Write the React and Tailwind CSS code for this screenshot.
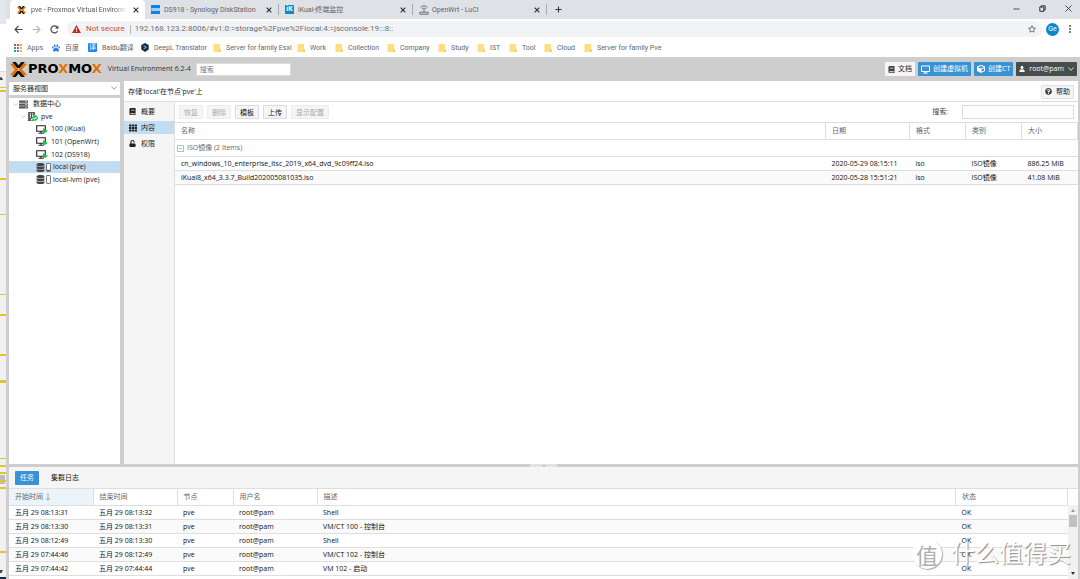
import React from "react";
import {
  FaBook,
  FaDesktop,
  FaCube,
  FaUser,
  FaQuestionCircle,
  FaTh,
  FaUnlock,
  FaDatabase,
  FaServer,
  FaBuilding,
  FaCheckCircle,
  FaPaw,
  FaRegStar,
} from "react-icons/fa";

const APP_FONT = "font-['Open_Sans','Noto_Sans_CJK_SC',sans-serif]";
const CHROME_FONT = "font-['Roboto','Noto_Sans_CJK_SC',sans-serif]";

function ProxmoxMark({ className }) {
  return (
    <svg viewBox="0 0 32 28" className={className} aria-hidden="true">
      <path d="M4 0h7l5 6 5-6h7l-9 11h-6z" fill="#111" />
      <path d="M4 28h7l5-6 5 6h7l-9-11h-6z" fill="#111" />
      <path d="M0 3h7l9 11-9 11H0l9-11z" fill="#e57000" />
      <path d="M32 3h-7l-9 11 9 11h7l-9-11z" fill="#e57000" />
    </svg>
  );
}

function CloseIcon() {
  return (
    <svg viewBox="0 0 6 6" className="size-[6px]" stroke="#333" strokeWidth="1.200" aria-hidden="true">
      <path d="M.7.7l4.600 4.600M5.300.7L.7 5.300" />
    </svg>
  );
}

function Chevron({ className }) {
  return (
    <svg viewBox="0 0 6 4" className={className} fill="none" stroke="currentColor" strokeWidth="0.800" aria-hidden="true">
      <path d="M.5.5L3 3.300 5.500.5" />
    </svg>
  );
}

function RouterIcon() {
  return (
    <svg viewBox="0 0 10 10" className="size-[10px]" fill="none" stroke="#666" strokeWidth="0.900" aria-hidden="true">
      <path d="M1.500 2.300Q5-.8 8.500 2.300M3 3.800Q5 2 7 3.800M5 4.200v3M.8 7.200h8.400v2H.8z" />
    </svg>
  );
}

const tabs = [
  {
    title: "DS918 - Synology DiskStation",
    icon: (
      <span className="flex size-[9px] items-center justify-center bg-[#0a84e8] text-[4px] font-bold leading-none text-white">
        DSM
      </span>
    ),
  },
  {
    title: "iKuai-终端监控",
    icon: (
      <span className="flex size-[9px] items-center justify-center bg-[#1487c9] text-[7px] font-bold leading-none text-white">
        iK
      </span>
    ),
  },
  { title: "OpenWrt - LuCI", icon: <RouterIcon /> },
];

function TabStrip() {
  return (
    <div className="flex h-[19px] shrink-0 items-stretch bg-[#dee1e6] pl-1 text-[7px] text-[#5f6368]">
      <div className="flex w-[135px] items-center rounded-t-[4px] bg-white pl-[7px] pr-[6px] text-[#54575b]">
        <ProxmoxMark className="mr-[5px] h-[8px] w-[9px] shrink-0" />
        <span className="flex-1 overflow-hidden whitespace-nowrap [mask-image:linear-gradient(to_right,#000_85%,transparent)]">
          pve - Proxmox Virtual Environment
        </span>
        <button aria-label="关闭标签页" className="ml-[5px]">
          <CloseIcon />
        </button>
      </div>
      {tabs.map((t) => (
        <div key={t.title} className="flex w-[134px] items-center py-1">
          <div className="flex h-full w-full items-center gap-[3px] border-r border-[#a5a8ad] pl-[6px] pr-[6px]">
            <span className="flex w-[10px] shrink-0">{t.icon}</span>
            <span className="flex-1 overflow-hidden whitespace-nowrap">{t.title}</span>
            <button aria-label="关闭标签页">
              <CloseIcon />
            </button>
          </div>
        </div>
      ))}
      <button aria-label="新标签页" className="ml-2 flex items-center">
        <svg viewBox="0 0 8 8" className="size-[7px]" stroke="#333" strokeWidth="1.200">
          <path d="M4 .5v7M.5 4h7" />
        </svg>
      </button>
      <div className="ml-auto flex items-center gap-[19px] pb-[3px] pr-2">
        <button aria-label="最小化">
          <svg viewBox="0 0 7 7" className="size-[7px]" stroke="#222" strokeWidth="0.800">
            <path d="M.5 4h6" />
          </svg>
        </button>
        <button aria-label="还原">
          <svg viewBox="0 0 7 7" className="size-[7px]" fill="none" stroke="#222" strokeWidth="0.900">
            <path d="M.8 2h4v4.300h-4zM2.200 2V.8h4v4.200H4.800" />
          </svg>
        </button>
        <button aria-label="关闭">
          <svg viewBox="0 0 7 7" className="size-[7px]" stroke="#222" strokeWidth="0.800">
            <path d="M.5.5l6 6M6.500.5l-6 6" />
          </svg>
        </button>
      </div>
    </div>
  );
}

function AddressBar() {
  return (
    <div className="flex h-[20px] shrink-0 items-center bg-white pl-2 pr-2 text-[#5f6368]">
      <button aria-label="后退">
        <svg viewBox="0 0 9 9" className="size-[9px]" fill="none" stroke="#44474b" strokeWidth="1.100">
          <path d="M8.500 4.500H1M4.500 1L1 4.500 4.500 8" />
        </svg>
      </button>
      <button aria-label="前进" className="ml-[9px]">
        <svg viewBox="0 0 9 9" className="size-[9px]" fill="none" stroke="#b5b7ba" strokeWidth="1.100">
          <path d="M.5 4.500H8M4.500 1L8 4.500 4.500 8" />
        </svg>
      </button>
      <button aria-label="重新加载" className="ml-[9px]">
        <svg viewBox="0 0 9 9" className="size-[9px]" fill="none" stroke="#44474b" strokeWidth="1.200">
          <path d="M7.600 6A3.500 3.500 0 1 1 7 2" />
          <path d="M8.400.5v3.300H5.100z" fill="#44474b" stroke="none" />
        </svg>
      </button>
      <div className="ml-2 flex h-4 flex-1 items-center rounded-full bg-[#f1f3f4] pl-[5px] pr-[6px] text-[8px]">
        <svg viewBox="0 0 9 8" className="h-2 w-[9px]" aria-hidden="true">
          <path d="M4.500 0L9 8H0z" fill="#c5281c" />
          <path d="M4.500 2.800v2.500M4.500 6v1" stroke="#fff" strokeWidth="0.900" />
        </svg>
        <span className="ml-[5px] whitespace-nowrap text-[#cf4b41]">Not secure</span>
        <span className="ml-[5px] mr-1 h-[9px] border-l border-[#b4b6b9]" />
        <input
          aria-label="地址"
          className="min-w-0 flex-1 bg-transparent text-[#6c6e71] outline-none"
          defaultValue="192.168.123.2:8006/#v1:0:=storage%2Fpve%2Flocal:4:=jsconsole:19:::8::"
        />
        <button aria-label="收藏">
          <FaRegStar className="size-2 text-[#55585c]" />
        </button>
      </div>
      <span className="ml-1 flex size-[13px] items-center justify-center rounded-full bg-[#0b84cf] text-[7px] leading-none text-white">
        Ge
      </span>
      <button aria-label="菜单" className="ml-[9px]">
        <svg viewBox="0 0 4 8" className="h-2 w-1" fill="#44474b">
          <circle cx="2" cy="1" r=".9" />
          <circle cx="2" cy="4" r=".9" />
          <circle cx="2" cy="7" r=".9" />
        </svg>
      </button>
    </div>
  );
}

const dotColors = ["#e8453c", "#e8453c", "#f2a33a", "#35a853", "#4a86e8", "#f2b52b", "#35a853", "#4a86e8", "#f2b52b"];

function Folder() {
  return (
    <svg viewBox="0 0 8 8" className="size-2" aria-hidden="true">
      <path d="M.5 0h6.500v5.500H8V8H.5z" fill="#fbdf82" />
      <path d="M6.500 5.500H8V8H6z" fill="#f0cf5c" />
    </svg>
  );
}

const bookmarks = [
  {
    name: "Apps",
    width: "w-[38px]",
    icon: (
      <svg viewBox="0 0 8 8" className="size-2" aria-hidden="true">
        {dotColors.map((c, i) => (
          <rect key={i} x={(i % 3) * 3} y={Math.floor(i / 3) * 3} width="2" height="2" fill={c} />
        ))}
      </svg>
    ),
  },
  { name: "百度", width: "w-[36px]", icon: <FaPaw className="size-2 text-[#2b7de9]" /> },
  {
    name: "Baidu翻译",
    width: "w-[53px]",
    icon: (
      <span className="flex size-[9px] items-center justify-center rounded-[1px] bg-[#1f87f0] text-[7px] leading-none text-white">
        译
      </span>
    ),
  },
  {
    name: "DeepL Translator",
    width: "w-[72px]",
    icon: (
      <svg viewBox="0 0 9 10" className="h-[9px] w-2" aria-hidden="true">
        <path d="M4.500 0L8.700 2.300v4.900L4.500 10 .3 7.200V2.300z" fill="#12304c" />
        <path d="M3 3l3 1.800L3 6.500" stroke="#fff" strokeWidth="0.700" fill="none" />
      </svg>
    ),
  },
  { name: "Server for family Esxi", width: "w-[84px]", icon: <Folder /> },
  { name: "Work", width: "w-[38px]", icon: <Folder /> },
  { name: "Collection", width: "w-[52px]", icon: <Folder /> },
  { name: "Company", width: "w-[51px]", icon: <Folder /> },
  { name: "Study", width: "w-[39px]", icon: <Folder /> },
  { name: "IST", width: "w-[32px]", icon: <Folder /> },
  { name: "Tool", width: "w-[35px]", icon: <Folder /> },
  { name: "Cloud", width: "w-[40px]", icon: <Folder /> },
  { name: "Server for family Pve", width: "w-[90px]", icon: <Folder /> },
];

function BookmarkBar() {
  return (
    <nav className="flex h-[18px] shrink-0 items-center bg-white pb-px pl-2 text-[7px] text-[#63666a]">
      {bookmarks.map((b) => (
        <a key={b.name} href="#" className={`flex shrink-0 items-center gap-[5px] whitespace-nowrap ${b.width}`}>
          {b.icon}
          {b.name}
        </a>
      ))}
    </nav>
  );
}

function AppHeader() {
  return (
    <header className="flex h-6 shrink-0 items-center pr-px">
      <ProxmoxMark className="ml-px h-[15px] w-[17px] shrink-0" />
      <span className="ml-px font-['DejaVu_Sans',sans-serif] text-[13px] font-bold leading-4 text-black">
        PRO<span className="text-[#e57000]">X</span>MO<span className="text-[#e57000]">X</span>
      </span>
      <span className="ml-[6px] whitespace-nowrap text-[#333]">Virtual Environment 6.2-4</span>
      <input
        aria-label="搜索"
        placeholder="搜索"
        className="ml-[5px] h-[13px] w-[95px] border border-[#dcdcdc] bg-white px-[3px] leading-none outline-none placeholder:text-[#777]"
      />
      <div className="ml-auto flex items-center gap-[3px] text-white">
        <button className="flex h-[14px] items-center gap-[3px] rounded-[1px] bg-[#f5f5f5] px-[3px] text-[#222]">
          <FaBook className="size-[7px] text-[#444]" />
          文档
        </button>
        <button className="flex h-[14px] items-center gap-[3px] rounded-[1px] bg-[#3892d4] px-[3px]">
          <FaDesktop className="size-[9px]" />
          创建虚拟机
        </button>
        <button className="flex h-[14px] items-center gap-[3px] rounded-[1px] bg-[#3892d4] px-[3px]">
          <FaCube className="size-2" />
          创建CT
        </button>
        <button className="flex h-[14px] items-center gap-1 rounded-[1px] bg-[#464d4d] px-[3px]">
          <FaUser className="size-[6px]" />
          <span>root@pam</span>
          <Chevron className="h-1 w-[6px]" />
        </button>
      </div>
    </header>
  );
}

function VmIcon() {
  return (
    <svg viewBox="0 0 12 9" className="h-[9px] w-3" aria-hidden="true">
      <path d="M.7.7h8.600v5.600H.7zM2.500 8.300h5M5 6.300v2" fill="none" stroke="#222" strokeWidth="1.100" />
      <path d="M7 3L12 6 7 9z" fill="#21bf4b" />
    </svg>
  );
}

function StorageIcon({ used }) {
  return (
    <span className="flex items-center gap-px">
      <FaDatabase className="size-[9px] text-[#444]" />
      <svg viewBox="0 0 5 9" className="h-[9px] w-[5px]" aria-hidden="true">
        <rect x=".5" y=".5" width="4" height="8" rx=".6" fill="#fff" stroke="#555" strokeWidth="0.800" />
        {used && <rect x="1" y="6.800" width="3" height="1.200" fill="#555" />}
      </svg>
    </span>
  );
}

const tree = [
  {
    label: "数据中心",
    pad: "pl-1 gap-[5px]",
    open: true,
    icon: <FaServer className="size-[9px] text-[#555]" />,
  },
  {
    label: "pve",
    pad: "pl-3 gap-[3px]",
    open: true,
    icon: (
      <span className="relative flex w-[11px]">
        <FaBuilding className="size-[9px] text-[#555]" />
        <FaCheckCircle className="absolute bottom-0 right-0 size-[6px] rounded-full bg-white text-[#21bf4b]" />
      </span>
    ),
  },
  { label: "100 (iKuai)", pad: "pl-[27px] gap-[3px]", icon: <VmIcon /> },
  { label: "101 (OpenWrt)", pad: "pl-[27px] gap-[3px]", icon: <VmIcon /> },
  { label: "102 (DS918)", pad: "pl-[27px] gap-[3px]", icon: <VmIcon /> },
  { label: "local (pve)", pad: "pl-[27px] gap-[2px]", icon: <StorageIcon used />, selected: true },
  { label: "local-lvm (pve)", pad: "pl-[27px] gap-[2px]", icon: <StorageIcon /> },
];

function ResourceTree() {
  return (
    <aside className="flex w-[111px] shrink-0 flex-col gap-[3px] pt-px">
      <div className="relative">
        <select
          aria-label="视图"
          className="block h-[13px] w-full appearance-none bg-white pl-1 leading-none text-[#222] outline-none"
        >
          <option>服务器视图</option>
        </select>
        <Chevron className="pointer-events-none absolute right-[3px] top-1 h-1 w-[6px] text-[#888]" />
      </div>
      <div className="flex-1 bg-white">
        <ul className="grid h-[88px] grid-rows-7 text-[#222]">
          {tree.map((n) => (
            <li key={n.label} className={`flex items-center whitespace-nowrap ${n.pad} ${n.selected ? "bg-[#c2ddf2]" : ""}`}>
              <span className="flex items-center gap-px">
                {n.open && <Chevron className="h-[3px] w-[5px] text-[#aaa]" />}
                {n.icon}
              </span>
              {n.label}
            </li>
          ))}
        </ul>
      </div>
    </aside>
  );
}

const sideNav = [
  { label: "概要", icon: <FaBook className="size-[7px]" /> },
  { label: "内容", icon: <FaTh className="size-2" />, active: true },
  { label: "权限", icon: <FaUnlock className="size-[7px]" /> },
];

const tools = [
  { label: "恢复", off: true },
  { label: "删除", off: true },
  { label: "模板" },
  { label: "上传" },
  { label: "显示配置", off: true },
];

const files = [
  ["cn_windows_10_enterprise_ltsc_2019_x64_dvd_9c09ff24.iso", "2020-05-29 08:15:11", "iso", "ISO镜像", "886.25 MiB"],
  ["iKuai8_x64_3.3.7_Build202005081035.iso", "2020-05-28 15:51:21", "iso", "ISO镜像", "41.08 MiB"],
];

function ContentTable() {
  return (
    <table className="w-full table-fixed border-collapse text-left">
      <colgroup>
        <col />
        <col className="w-[84px]" />
        <col className="w-[56px]" />
        <col className="w-[56px]" />
        <col className="w-[56px]" />
      </colgroup>
      <thead>
        <tr className="h-[17px] border-y border-[#dedede] text-[#666]">
          {["名称", "日期", "格式", "类别", "大小"].map((h) => (
            <th key={h} className="border-r border-[#dedede] px-[6px] py-0 font-normal">
              {h}
            </th>
          ))}
        </tr>
      </thead>
      <tbody className="text-[#111]">
        <tr className="h-[17px] border-b border-[#dedede] text-[#666]">
          <td colSpan={5} className="px-[2px]">
            <span className="flex items-center gap-[3px]">
              <svg viewBox="0 0 7 7" className="size-[7px]" fill="none" stroke="#aaa" strokeWidth="0.800" aria-hidden="true">
                <path d="M.5.5h6v6h-6zM2 3.500h3" />
              </svg>
              ISO镜像 (2 Items)
            </span>
          </td>
        </tr>
        {files.map((f) => (
          <tr key={f[0]} className="h-[14px] border-b border-[#dedede] even:bg-white odd:bg-[#fafafa]">
            {f.map((c, i) => (
              <td key={i} className="whitespace-nowrap px-[6px]">
                {c}
              </td>
            ))}
          </tr>
        ))}
      </tbody>
    </table>
  );
}

function StoragePanel() {
  return (
    <main className="flex min-w-0 flex-1 flex-col bg-white pt-px">
      <div className="flex h-5 shrink-0 items-center justify-between border-b border-[#dedede] pl-1 pr-1 text-[#222]">
        <h1>存储'local'在节点'pve'上</h1>
        <button className="flex h-[14px] items-center gap-1 rounded-[1px] border border-[#e0e0e0] bg-[#f5f5f5] px-[3px]">
          <FaQuestionCircle className="size-[7px] text-[#444]" />
          帮助
        </button>
      </div>
      <div className="flex flex-1">
        <nav className="flex w-[51px] shrink-0 flex-col gap-[3px] border-r border-[#dedede] bg-[#f5f5f5] pt-[3px] text-[#222]">
          {sideNav.map((s) => (
            <a key={s.label} href="#" className={`flex h-[13px] items-center pl-[5px] ${s.active ? "bg-[#c2ddf2]" : ""}`}>
              <span className="flex w-3">{s.icon}</span>
              {s.label}
            </a>
          ))}
        </nav>
        <section className="min-w-0 flex-1">
          <div className="flex h-5 items-center gap-1 pl-1 pr-1">
            {tools.map((t) => (
              <button
                key={t.label}
                disabled={t.off}
                className="h-[14px] rounded-[1px] border border-[#dcdcdc] bg-[#f5f5f5] px-1 leading-none text-[#111] disabled:border-[#ececec] disabled:text-[#aaa]"
              >
                {t.label}
              </button>
            ))}
            <label htmlFor="filter" className="ml-auto mr-[10px] text-[#444]">
              搜索:
            </label>
            <input id="filter" className="h-[14px] w-[112px] border border-[#dcdcdc] bg-white outline-none" />
          </div>
          <ContentTable />
        </section>
      </div>
    </main>
  );
}

const tasks = [
  ["五月 29 08:13:31", "五月 29 08:13:32", "pve", "root@pam", "Shell", "OK"],
  ["五月 29 08:13:30", "五月 29 08:13:31", "pve", "root@pam", "VM/CT 100 - 控制台", "OK"],
  ["五月 29 08:12:49", "五月 29 08:13:30", "pve", "root@pam", "Shell", "OK"],
  ["五月 29 07:44:46", "五月 29 08:12:49", "pve", "root@pam", "VM/CT 102 - 控制台", "OK"],
  ["五月 29 07:44:42", "五月 29 07:44:44", "pve", "root@pam", "VM 102 - 启动", "OK"],
];

function TaskLog() {
  return (
    <section className="flex h-28 shrink-0 flex-col overflow-hidden bg-white">
      <div className="flex h-[21px] shrink-0 items-center gap-3 bg-[#f5f5f5] pl-[6px] text-[#111]">
        <button className="h-[14px] rounded-[1px] bg-[#3892d4] px-[5px] leading-none text-white">任务</button>
        <button className="h-[14px] leading-none">集群日志</button>
      </div>
      <div className="flex flex-1">
        <table className="flex-1 table-fixed border-collapse self-start text-left">
          <colgroup>
            <col className="w-[84px]" />
            <col className="w-[84px]" />
            <col className="w-[56px]" />
            <col className="w-[84px]" />
            <col />
            <col className="w-[112px]" />
          </colgroup>
          <thead>
            <tr className="h-[17px] border-y border-[#dedede] text-[#666]">
              {["开始时间", "结束时间", "节点", "用户名", "描述", "状态"].map((h, i) => (
                <th key={h} className="border-r border-[#dedede] px-[6px] font-normal first:bg-[#ebf4fb]">
                  {h}
                  {i === 0 && (
                    <svg viewBox="0 0 6 8" className="ml-[2px] inline h-2 w-[6px] align-middle" fill="none" stroke="#999" strokeWidth="0.800">
                      <path d="M3 0v7.300M.7 5L3 7.300 5.300 5" />
                    </svg>
                  )}
                </th>
              ))}
            </tr>
          </thead>
          <tbody className="text-[#111]">
            {tasks.map((t) => (
              <tr key={t[0]} className="h-[14px] border-b border-[#dedede] even:bg-[#fafafa]">
                {t.map((c, i) => (
                  <td key={i} className="whitespace-nowrap px-[6px]">
                    {c}
                  </td>
                ))}
              </tr>
            ))}
          </tbody>
        </table>
        <div className="flex w-[10px] flex-col border-t border-[#dedede] pt-4">
          <div className="flex flex-1 flex-col items-center bg-[#f1f1f1] pb-1 pt-1">
            <svg viewBox="0 0 4 3" className="h-[3px] w-1" aria-hidden="true">
              <path d="M0 3l2-3 2 3z" fill="#999" />
            </svg>
            <span className="mt-[3px] h-3 w-2 bg-[#c1c1c1]" />
            <svg viewBox="0 0 4 3" className="mt-auto h-[3px] w-1" aria-hidden="true">
              <path d="M0 0l2 3 2-3z" fill="#333" />
            </svg>
          </div>
        </div>
      </div>
    </section>
  );
}

const marks = [
  [87, 1],
  [90, 2],
  [178, 2],
  [214, 1],
  [294, 1],
  [314, 2],
  [354, 2],
  [380, 3],
  [458, 1],
  [465, 2],
  [472, 2],
  [480, 2],
  [487, 2],
  [551, 2],
];

function OverviewRuler() {
  return (
    <svg className="h-full w-[6px] shrink-0 bg-[#f0f0f0]" aria-hidden="true">
      <rect width="6" height="24" fill="#e3e7ee" />
      <rect y="24" width="6" height="47" fill="#fff" />
      <rect y="71" width="6" height="1" fill="#ddd" />
      <path d="M0 77.500L1.500 77l1.500 3H0z" fill="#444" />
      <rect y="475" width="5" height="9" fill="#bdbdbd" />
      {marks.map(([y, h]) => (
        <rect key={y} y={y} width="6" height={h} fill="#e3c42a" />
      ))}
      <path d="M0 570h3l-1.500 3H0z" fill="#444" />
      <rect y="577" width="6" height="2" fill="#1a2a44" />
    </svg>
  );
}

function Watermark() {
  return (
    <div className="pointer-events-none absolute bottom-[10px] right-[9px] flex items-center gap-[9px] font-['Noto_Sans_CJK_SC',sans-serif] leading-none">
      <span className="flex size-[30px] items-center justify-center rounded-full bg-white text-[22px] text-[#b0b0b0] shadow-[1px_1px_1px_#aaa]">
        值
      </span>
      <span className="pb-1 text-[24px] text-white [text-shadow:1px_1px_1px_#888]">什么值得买</span>
    </div>
  );
}

export default function App() {
  return (
    <div className={`relative flex h-screen overflow-hidden text-[7px] leading-[10px] ${APP_FONT}`}>
      <OverviewRuler />
      <div className="flex min-w-0 flex-1 flex-col">
        <div className={`flex flex-col ${CHROME_FONT}`}>
          <TabStrip />
          <AddressBar />
          <BookmarkBar />
        </div>
        <div className="flex min-h-0 flex-1 flex-col bg-[#cecece] pl-[3px] pr-[2px]">
          <AppHeader />
          <div className="flex min-h-0 flex-1 gap-1">
            <ResourceTree />
            <StoragePanel />
          </div>
          <div className="flex h-[3px] shrink-0 justify-center">
            <span className="flex w-[27px] items-center justify-center bg-[#e3e3e3]">
              <svg viewBox="0 0 4 2" className="h-[2px] w-1" aria-hidden="true">
                <path d="M0 0h4L2 2z" fill="#bbb" />
              </svg>
            </span>
          </div>
          <TaskLog />
        </div>
      </div>
      <Watermark />
    </div>
  );
}
